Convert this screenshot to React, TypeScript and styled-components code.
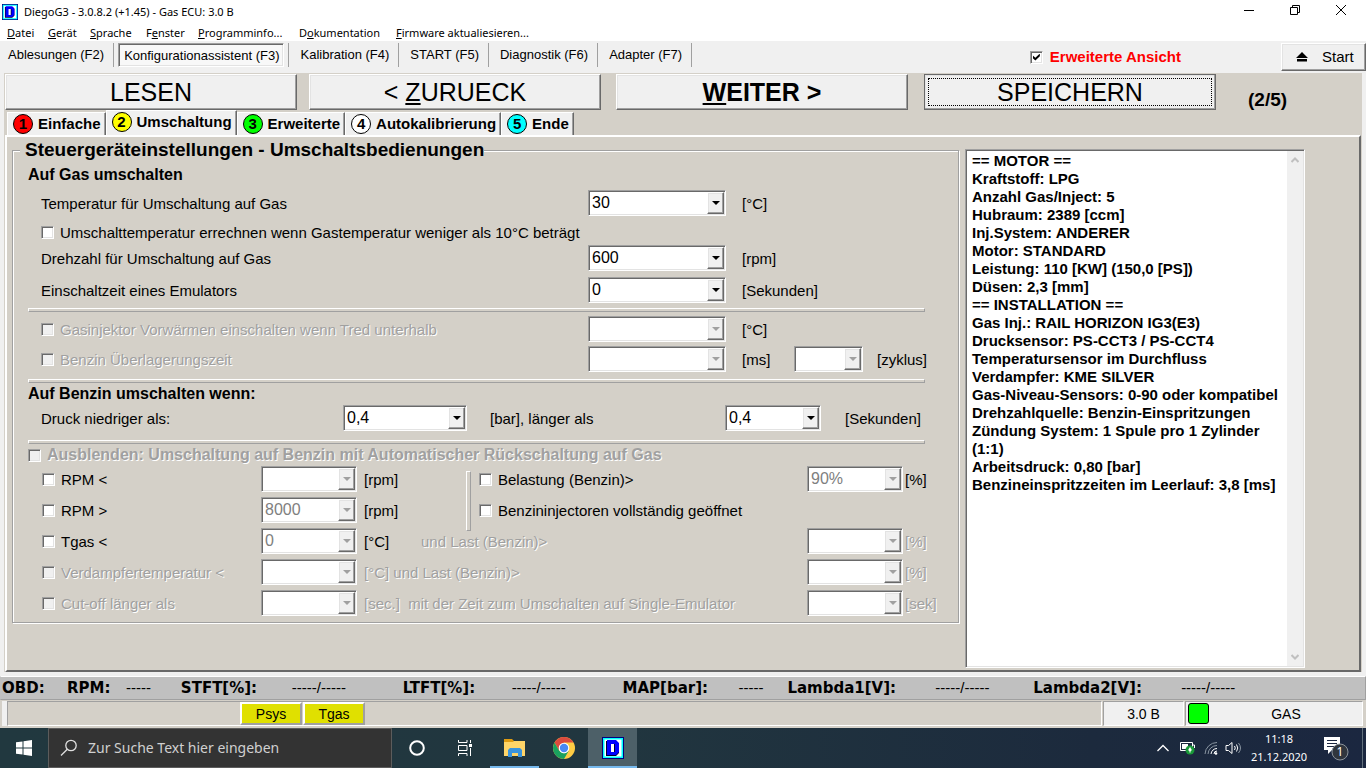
import React from "react";
import styled, { createGlobalStyle, css } from "styled-components";

const face = "#d4d0c8";
const light = "#f0f0f0";
const arial = '"Liberation Sans", Arial, sans-serif';
const segoe = '"Noto Sans", "Open Sans", sans-serif';

const GlobalStyle = createGlobalStyle`
  * { box-sizing: border-box; }
  body { margin: 0; background: ${light}; color: #000; font: 16px/20px ${arial}; }
  button, input, select, textarea { font: inherit; color: inherit; margin: 0; }
`;

const raised = css`
  border: 1px solid;
  border-color: #fff #696969 #696969 #fff;
  box-shadow: inset -1px -1px #a0a0a0, inset 1px 1px #e3e3e3;
`;
const sunken = css`
  border: 1px solid;
  border-color: #a0a0a0 #fff #fff #a0a0a0;
  box-shadow: inset 1px 1px #696969, inset -1px -1px #e3e3e3;
`;
const disabledText = css`
  color: #a0a0a0;
  text-shadow: 1px 1px 0 #fff;
`;

const Screen = styled.div`
  display: flex;
  flex-direction: column;
  min-height: 100vh;
`;

/* ---------- title and menu ---------- */
const TitleBar = styled.header`
  display: flex;
  align-items: center;
  height: 24px;
  padding: 0 2px;
  background: #fff;
  font: 11px/16px ${segoe};
`;
const Title = styled.h1`
  flex: 1;
  margin: 0;
  padding-left: 6px;
  font: inherit;
`;
const WindowButton = styled.button`
  display: flex;
  align-items: center;
  align-self: flex-start;
  justify-content: center;
  width: 46px;
  height: 20px;
  padding: 0;
  border: 0;
  background: none;
`;
const MenuBar = styled.nav`
  display: grid;
  grid-template-columns: 41px 42px 56px 52px 101px 97px auto;
  justify-content: start;
  height: 17px;
  padding-left: 7px;
  background: #fff;
`;
const MenuButton = styled.button`
  padding: 0;
  border: 0;
  background: none;
  font: 11px/17px ${segoe};
  text-align: left;
  white-space: nowrap;
`;

/* ---------- toolbar ---------- */
const ToolBar = styled.div`
  display: flex;
  align-items: flex-start;
  height: 32px;
  padding: 2px 0 0 1px;
`;
const ToolItem = styled.div`
  padding-right: 4px;
  margin-right: 4px;
  border-right: 1px solid #a0a0a0;
`;
const ToolButton = styled.button<{ $pressed?: boolean }>`
  display: block;
  height: 24px;
  padding: 0 4px 0 6px;
  border: 1px solid transparent;
  background: none;
  font-size: 13px;
  line-height: 22px;
  white-space: nowrap;
  ${(p) =>
    p.$pressed &&
    css`
      ${sunken}
      padding: 2px 4px 0 5px;
      line-height: 20px;
      background: #f8f8f8;
    `}
`;
const ExtendedView = styled.label`
  display: flex;
  align-items: center;
  gap: 7px;
  margin-left: auto;
  padding-top: 4px;
  color: #f00;
  font-size: 15px;
  font-weight: bold;
`;
const StartButton = styled.button`
  ${raised}
  display: flex;
  align-items: center;
  gap: 14px;
  width: 85px;
  height: 28px;
  margin-left: 100px;
  padding: 0 0 0 14px;
  background: ${light};
  font-size: 15px;
`;
const CheckInput = styled.input`
  ${sunken}
  appearance: none;
  flex: none;
  display: grid;
  place-items: center;
  width: 13px;
  height: 13px;
  background: #fff;
  &:disabled {
    background: ${light};
  }
  &:checked::after {
    content: "";
    width: 7px;
    height: 7px;
    background: #000;
    clip-path: polygon(0 28%, 36% 60%, 100% 0, 100% 40%, 36% 100%, 0 68%);
  }
`;

/* ---------- main area ---------- */
const Main = styled.main`
  display: flex;
  flex: 1;
  flex-direction: column;
  margin: 0 4px 4px;
  padding: 1px 0 0 1px;
  background: ${face};
`;
const StepBar = styled.div`
  display: grid;
  grid-template-columns: 292fr 12fr 292fr 15fr 292fr 16fr 292fr 32fr 114fr;
`;
const StepButton = styled.button<{ $column: number; $bold?: boolean; $focused?: boolean }>`
  ${raised}
  grid-row: 1;
  grid-column: ${(p) => p.$column};
  height: 36px;
  padding: 0;
  background: ${light};
  font-size: 25px;
  line-height: 32px;
  font-weight: ${(p) => (p.$bold ? "bold" : "normal")};
  ${(p) =>
    p.$focused &&
    css`
      border-color: #696969;
      outline: 1px dotted #000;
      outline-offset: -5px;
    `}
`;
const StepCount = styled.div`
  grid-row: 1;
  grid-column: 9;
  padding-top: 16px;
  font-size: 19px;
  font-weight: bold;
`;
const TabBar = styled.div`
  display: flex;
  align-items: flex-end;
  height: 25px;
  padding-left: 2px;
`;
const Tab = styled.button<{ $active?: boolean }>`
  display: flex;
  align-items: center;
  gap: 5px;
  height: ${(p) => (p.$active ? 25 : 23)}px;
  padding: ${(p) => (p.$active ? "0 4px 3px 5px" : "0 4px 0 5px")};
  border: 1px solid;
  border-color: #fff #696969 transparent #fff;
  border-bottom: 0;
  box-shadow: inset -1px 0 #a0a0a0;
  background: ${light};
  font-size: 15px;
  font-weight: bold;
  white-space: nowrap;
`;
const TabNumber = styled.span<{ $color: string }>`
  width: 20px;
  height: 20px;
  border: 1px solid #000;
  border-radius: 50%;
  background: ${(p) => p.$color};
  line-height: 18px;
  text-align: center;
`;
const Panel = styled.section`
  display: flex;
  flex: 1;
  align-items: flex-start;
  gap: 6px;
  margin-right: 1px;
  padding: 1px 54px 2px 5px;
  border: 2px solid;
  border-color: #fff #696969 #696969 #fff;
`;
const Group = styled.fieldset`
  flex: 1;
  min-width: 0;
  margin: 0;
  padding: 2px 0 6px;
  border: 1px solid #a0a0a0;
  box-shadow: 1px 1px #fff, inset 1px 1px #fff;
`;
const Legend = styled.legend`
  margin-left: 7px;
  padding: 0 0 0 5px;
  background: ${face};
  font-size: 19px;
  line-height: 24px;
  font-weight: bold;
`;
const Heading = styled.h2`
  margin: 0 0 0 15px;
  font-size: 16px;
  line-height: 22px;
`;
const Rule = styled.hr<{ $before: number; $after: number }>`
  height: 4px;
  margin: ${(p) => p.$before}px 33px ${(p) => p.$after}px 15px;
  border: 1px solid;
  border-color: #fff #a0a0a0 #a0a0a0 #fff;
`;
const Row = styled.div<{ $gap?: number }>`
  display: grid;
  grid-template-columns: minmax(0, 1fr) 154px 52px 83px 81px;
  align-items: center;
  height: 26px;
  margin-top: ${(p) => p.$gap ?? 0}px;
  padding-left: 28px;
  white-space: nowrap;
`;
const PressureRow = styled(Row)`
  grid-template-columns: minmax(0, 1fr) 147px 235px 120px 113px;
`;
const ReturnGrid = styled.div`
  display: grid;
  grid-template-columns: minmax(0, 1fr) 103px 57px 45px 13px 328px 98px 53px;
  grid-auto-rows: 26px;
  row-gap: 5px;
  align-items: center;
  padding-left: 29px;
  white-space: nowrap;
`;
const Cell = styled.div<{ $row: number; $from: number; $to?: number }>`
  display: flex;
  grid-row: ${(p) => p.$row};
  grid-column: ${(p) => p.$from} / ${(p) => p.$to ?? p.$from + 1};
`;
const Divider = styled.div`
  grid-row: 1 / 3;
  grid-column: 5;
  align-self: start;
  width: 5px;
  height: 60px;
  margin-top: 5px;
  border: 1px solid;
  border-color: #fff #a0a0a0 #a0a0a0 #fff;
`;
const Text = styled.label<{ $off?: boolean }>`
  padding-top: 2px;
  font-size: 15px;
  ${(p) => p.$off && disabledText}
`;
const CheckLabel = styled.label<{ $off?: boolean; $bold?: boolean }>`
  display: flex;
  align-items: center;
  gap: 6px;
  padding-top: ${(p) => (p.$bold ? 0 : 1)}px;
  font-size: ${(p) => (p.$bold ? 16 : 15)}px;
  font-weight: ${(p) => (p.$bold ? "bold" : "normal")};
  ${(p) => p.$off && disabledText}
`;
const Combo = styled.span<{ $width: number }>`
  ${sunken}
  display: grid;
  grid-template-columns: 1fr 17px;
  width: ${(p) => p.$width}px;
  height: 26px;
  padding: 1px;
  background: #fff;
`;
const ComboSelect = styled.select`
  appearance: none;
  grid-area: 1 / 1 / 2 / 3;
  min-width: 0;
  padding: 0 0 0 2px;
  border: 0;
  background: #fff;
  outline: 0;
  &:disabled {
    color: #808080;
    opacity: 1;
  }
`;
const ComboArrow = styled.span<{ $off?: boolean }>`
  ${raised}
  grid-area: 1 / 2;
  display: grid;
  place-items: center;
  background: ${light};
  pointer-events: none;
  &::after {
    content: "";
    border: 4px solid transparent;
    border-top-color: ${(p) => (p.$off ? "#a0a0a0" : "#000")};
    border-bottom: 0;
  }
`;
const Info = styled.div`
  ${sunken}
  display: flex;
  align-self: stretch;
  width: 340px;
  margin-top: 11px;
  padding: 1px;
  background: #fff;
`;
const InfoText = styled.textarea`
  flex: 1;
  min-width: 0;
  padding: 1px 4px 0 5px;
  border: 0;
  outline: 0;
  resize: none;
  overflow: hidden;
  background: #fff;
  font-size: 15px;
  line-height: 18px;
  font-weight: bold;
`;
const ScrollTrack = styled.div`
  display: flex;
  flex-direction: column;
  justify-content: space-between;
  align-items: center;
  width: 16px;
  padding: 6px 0;
  background: ${light};
`;

/* ---------- readouts and status ---------- */
const Readouts = styled.div`
  display: grid;
  grid-template-columns: 65fr 59fr 55fr 111fr 111fr 109fr 111fr 116fr 49fr 148fr 98fr 148fr 184fr;
  align-items: center;
  height: 24px;
  padding-left: 1px;
  border: 1px solid;
  border-color: #fff #a0a0a0 #a0a0a0 #c0c0c0;
  background: #c0c0c0;
  white-space: nowrap;
`;
const ReadoutName = styled.span`
  font: bold 15px/20px "DejaVu Sans", Verdana, sans-serif;
`;
const ReadoutValue = styled.span`
  font-size: 15px;
`;
const StatusBar = styled.footer`
  display: flex;
  gap: 1px;
  height: 28px;
  padding: 1px 3px 2px 2px;
  background: ${face};
  font-size: 14px;
`;
const StatusCell = styled.div<{ $width?: number; $plain?: boolean }>`
  display: flex;
  align-items: center;
  justify-content: center;
  gap: 1px;
  flex: ${(p) => (p.$width ? `0 0 ${p.$width}px` : "1")};
  border: 1px solid;
  border-color: #a0a0a0 #fff #fff #a0a0a0;
  background: ${(p) => (p.$plain ? face : light)};
`;
const SensorCell = styled(StatusCell)`
  justify-content: flex-start;
  margin-left: 5px;
  padding-left: 232px;
  box-shadow: -5px 0 ${light};
`;
const SensorButton = styled.button`
  width: 62px;
  height: 23px;
  padding: 0;
  border: 2px solid;
  border-color: #fff #a0a0a0 #a0a0a0 #fff;
  background: #e0e000;
  line-height: 18px;
`;
const Lamp = styled.span`
  width: 21px;
  height: 21px;
  margin-left: 2px;
  border: 1px solid #000;
  border-radius: 3px;
  background: #0f0;
`;
const Fuel = styled.span`
  flex: 1;
  text-align: center;
`;

/* ---------- taskbar ---------- */
const TaskBar = styled.nav`
  display: flex;
  height: 40px;
  background: linear-gradient(90deg, #21383f 0%, #21363f 45%, #1c2a3d 80%, #1b2740 100%);
  color: #fff;
  font: 11px/18px ${segoe};
`;
const TaskButton = styled.button<{ $active?: boolean; $open?: boolean }>`
  display: flex;
  align-items: center;
  justify-content: center;
  width: 49px;
  padding: 0;
  border: 0;
  background: ${(p) => (p.$active ? "#4d6068" : "none")};
  ${(p) => p.$open && "box-shadow: inset 0 -2px #76b9ed;"}
`;
const StartMenuButton = styled(TaskButton)`
  width: 48px;
`;
const SearchBox = styled.label`
  display: flex;
  align-items: center;
  gap: 10px;
  width: 344px;
  padding-left: 11px;
  border: 1px solid #5c5c5c;
  background: #333;
`;
const SearchInput = styled.input`
  flex: 1;
  min-width: 0;
  padding: 0;
  border: 0;
  outline: 0;
  background: none;
  font-size: 14px;
  &::placeholder {
    color: #d0d0d0;
    opacity: 1;
  }
`;
const Tray = styled.div`
  display: flex;
  align-items: center;
  margin-left: auto;
  padding-right: 3px;
`;
const TrayButton = styled.button<{ $width: number }>`
  display: flex;
  align-items: center;
  justify-content: center;
  width: ${(p) => p.$width}px;
  height: 40px;
  padding: 0;
  border: 0;
  background: none;
`;
const Clock = styled.time`
  width: 60px;
  margin: 0 4px;
  text-align: center;
`;
const ShowDesktop = styled.div`
  width: 4px;
  border-left: 1px solid #62707c;
`;

const AppLogo = ({ size }: { size: number }) => (
  <svg width={size} height={size} viewBox="0 0 22 22" aria-hidden="true">
    <rect width="22" height="22" fill="#000080" />
    <rect x="1" y="1" width="20" height="20" fill="#0ff" />
    <rect x="2.500" y="2.500" width="17" height="17" fill="#fff" />
    <path fillRule="evenodd" d="M4 4h10l3 3v9l-3 3H4zM8 7v9h4V7z" fill="#000030" />
    <path fillRule="evenodd" d="M5 3h9l3 3v9l-3 3H5zM9 7v8h4V7z" fill="#00f" />
  </svg>
);

type ComboProps = { id: string; width: number; value?: string; off?: boolean; label: string };
const ComboBox = ({ id, width, value = "", off, label }: ComboProps) => (
  <Combo $width={width}>
    <ComboSelect id={id} defaultValue={value} disabled={off} aria-label={label}>
      <option value={value}>{value}</option>
    </ComboSelect>
    <ComboArrow $off={off} />
  </Combo>
);

const Check = ({ text, off, bold }: { text: string; off?: boolean; bold?: boolean }) => (
  <CheckLabel $off={off} $bold={bold}>
    <CheckInput type="checkbox" disabled={off} />
    {text}
  </CheckLabel>
);

const menus: [string, string, string][] = [
  ["", "D", "atei"],
  ["", "G", "erät"],
  ["", "S", "prache"],
  ["F", "e", "nster"],
  ["", "P", "rogramminfo..."],
  ["D", "o", "kumentation"],
  ["", "F", "irmware aktualiesieren..."],
];
const tools = [
  "Ablesungen (F2)",
  "Konfigurationassistent (F3)",
  "Kalibration (F4)",
  "START (F5)",
  "Diagnostik (F6)",
  "Adapter (F7)",
];
const tabs: [string, string][] = [
  ["Einfache", "#f00"],
  ["Umschaltung", "#ff0"],
  ["Erweiterte", "#0f0"],
  ["Autokalibrierung", "#fff"],
  ["Ende", "#0ff"],
];
const info = [
  "== MOTOR ==",
  "Kraftstoff: LPG",
  "Anzahl Gas/Inject: 5",
  "Hubraum: 2389 [ccm]",
  "Inj.System: ANDERER",
  "Motor: STANDARD",
  "Leistung: 110 [KW] (150,0 [PS])",
  "Düsen: 2,3 [mm]",
  "== INSTALLATION ==",
  "Gas Inj.: RAIL HORIZON IG3(E3)",
  "Drucksensor: PS-CCT3 / PS-CCT4",
  "Temperatursensor im Durchfluss",
  "Verdampfer: KME SILVER",
  "Gas-Niveau-Sensors: 0-90 oder kompatibel",
  "Drehzahlquelle: Benzin-Einspritzungen",
  "Zündung System: 1 Spule pro 1 Zylinder (1:1)",
  "Arbeitsdruck: 0,80 [bar]",
  "Benzineinspritzzeiten im Leerlauf: 3,8 [ms]",
].join("\n");

export default function App() {
  return (
    <Screen>
      <GlobalStyle />
      <TitleBar>
        <AppLogo size={16} />
        <Title>DiegoG3 - 3.0.8.2 (+1.45) - Gas ECU: 3.0 B</Title>
        <WindowButton aria-label="Minimieren">
          <svg width="10" height="10"><path d="M0 5.500h10" stroke="#000" /></svg>
        </WindowButton>
        <WindowButton aria-label="Verkleinern">
          <svg width="10" height="10" fill="none" stroke="#000"><path d="M0.500 2.500h7v7h-7zM2.500 2.500v-2h7v7h-2" /></svg>
        </WindowButton>
        <WindowButton aria-label="Schließen">
          <svg width="10" height="10"><path d="M0 0l10 10M10 0L0 10" stroke="#000" /></svg>
        </WindowButton>
      </TitleBar>
      <MenuBar>
        {menus.map(([a, key, b]) => (
          <MenuButton key={b}>{a}<u>{key}</u>{b}</MenuButton>
        ))}
      </MenuBar>

      <ToolBar>
        {tools.map((name, i) => (
          <ToolItem key={name}><ToolButton $pressed={i === 1}>{name}</ToolButton></ToolItem>
        ))}
        <ExtendedView>
          <CheckInput type="checkbox" defaultChecked />
          Erweiterte Ansicht
        </ExtendedView>
        <StartButton>
          <svg width="12" height="10" aria-hidden="true"><path d="M6 0l6 6H0zM1 7h10v2.500H1z" /></svg>
          Start
        </StartButton>
      </ToolBar>

      <Main>
        <StepBar>
          <StepButton $column={1}>LESEN</StepButton>
          <StepButton $column={3}>&lt; <u>Z</u>URUECK</StepButton>
          <StepButton $column={5} $bold><u>W</u>EITER &gt;</StepButton>
          <StepButton $column={7} $focused>SPEICHERN</StepButton>
          <StepCount>(2/5)</StepCount>
        </StepBar>
        <TabBar role="tablist">
          {tabs.map(([name, color], i) => (
            <Tab key={name} role="tab" aria-selected={i === 1} $active={i === 1}>
              <TabNumber $color={color}>{i + 1}</TabNumber>
              {name}
            </Tab>
          ))}
        </TabBar>
        <Panel>
          <Group>
            <Legend>Steuergeräteinstellungen - Umschaltsbedienungen</Legend>
            <Heading>Auf Gas umschalten</Heading>
            <Row $gap={4}>
              <Text htmlFor="temp">Temperatur für Umschaltung auf Gas</Text>
              <ComboBox id="temp" label="Temperatur" width={138} value="30" />
              <Text as="span">[°C]</Text>
            </Row>
            <Row $gap={3}>
              <Check text="Umschalttemperatur errechnen wenn Gastemperatur weniger als 10°C beträgt" />
            </Row>
            <Row>
              <Text htmlFor="speed">Drehzahl für Umschaltung auf Gas</Text>
              <ComboBox id="speed" label="Drehzahl" width={138} value="600" />
              <Text as="span">[rpm]</Text>
            </Row>
            <Row $gap={6}>
              <Text htmlFor="emu">Einschaltzeit eines Emulators</Text>
              <ComboBox id="emu" label="Einschaltzeit" width={138} value="0" />
              <Text as="span">[Sekunden]</Text>
            </Row>
            <Rule $before={5} $after={4} />
            <Row>
              <Check off text="Gasinjektor Vorwärmen einschalten wenn Tred unterhalb" />
              <ComboBox id="preheat" label="Tred" width={138} off />
              <Text as="span">[°C]</Text>
            </Row>
            <Row $gap={4}>
              <Check off text="Benzin Überlagerungszeit" />
              <ComboBox id="overlap" label="Überlagerungszeit" width={138} off />
              <Text as="span">[ms]</Text>
              <ComboBox id="cycle" label="Zyklus" width={69} off />
              <Text as="span">[zyklus]</Text>
            </Row>
            <Rule $before={7} $after={0} />
            <Heading>Auf Benzin umschalten wenn:</Heading>
            <PressureRow>
              <Text htmlFor="press">Druck niedriger als:</Text>
              <ComboBox id="press" label="Druck" width={124} value="0,4" />
              <Text htmlFor="pressTime">[bar], länger als</Text>
              <ComboBox id="pressTime" label="Dauer" width={96} value="0,4" />
              <Text as="span">[Sekunden]</Text>
            </PressureRow>
            <Rule $before={9} $after={0} />
            <Heading>
              <Check off bold text="Ausblenden: Umschaltung auf Benzin mit Automatischer Rückschaltung auf Gas" />
            </Heading>
            <ReturnGrid>
              <Cell $row={1} $from={1}><Check text="RPM <" /></Cell>
              <Cell $row={1} $from={2}><ComboBox id="rpmLow" label="RPM kleiner" width={96} off /></Cell>
              <Cell $row={1} $from={3}><Text as="span">[rpm]</Text></Cell>
              <Cell $row={1} $from={6}><Check text="Belastung (Benzin)>" /></Cell>
              <Cell $row={1} $from={7}><ComboBox id="load" label="Belastung" width={96} value="90%" off /></Cell>
              <Cell $row={1} $from={8}><Text as="span">[%]</Text></Cell>
              <Divider />
              <Cell $row={2} $from={1}><Check text="RPM >" /></Cell>
              <Cell $row={2} $from={2}><ComboBox id="rpmHigh" label="RPM größer" width={96} value="8000" off /></Cell>
              <Cell $row={2} $from={3}><Text as="span">[rpm]</Text></Cell>
              <Cell $row={2} $from={6}><Check text="Benzininjectoren vollständig geöffnet" /></Cell>
              <Cell $row={3} $from={1}><Check text="Tgas <" /></Cell>
              <Cell $row={3} $from={2}><ComboBox id="tgas" label="Tgas" width={96} value="0" off /></Cell>
              <Cell $row={3} $from={3}><Text as="span">[°C]</Text></Cell>
              <Cell $row={3} $from={4} $to={7}><Text htmlFor="tgasLoad" $off>und Last (Benzin)&gt;</Text></Cell>
              <Cell $row={3} $from={7}><ComboBox id="tgasLoad" label="Last" width={96} off /></Cell>
              <Cell $row={3} $from={8}><Text as="span" $off>[%]</Text></Cell>
              <Cell $row={4} $from={1}><Check off text="Verdampfertemperatur <" /></Cell>
              <Cell $row={4} $from={2}><ComboBox id="evap" label="Verdampfertemperatur" width={96} off /></Cell>
              <Cell $row={4} $from={3} $to={7}><Text htmlFor="evapLoad" $off>[°C] und Last (Benzin)&gt;</Text></Cell>
              <Cell $row={4} $from={7}><ComboBox id="evapLoad" label="Last" width={96} off /></Cell>
              <Cell $row={4} $from={8}><Text as="span" $off>[%]</Text></Cell>
              <Cell $row={5} $from={1}><Check off text="Cut-off länger als" /></Cell>
              <Cell $row={5} $from={2}><ComboBox id="cutoff" label="Cut-off" width={96} off /></Cell>
              <Cell $row={5} $from={3} $to={7}>
                <Text htmlFor="single" $off>[sec.]&nbsp; mit der Zeit zum Umschalten auf Single-Emulator</Text>
              </Cell>
              <Cell $row={5} $from={7}><ComboBox id="single" label="Single-Emulator" width={96} off /></Cell>
              <Cell $row={5} $from={8}><Text as="span" $off>[sek]</Text></Cell>
            </ReturnGrid>
          </Group>
          <Info>
            <InfoText readOnly aria-label="Zusammenfassung" value={info} />
            <ScrollTrack>
              <svg width="8" height="6" fill="none" stroke="#c0c0c0" strokeWidth="2"><path d="M0.500 5L4 1.500 7.500 5" /></svg>
              <svg width="8" height="6" fill="none" stroke="#c0c0c0" strokeWidth="2"><path d="M0.500 1L4 4.500 7.500 1" /></svg>
            </ScrollTrack>
          </Info>
        </Panel>
      </Main>

      <Readouts>
        <ReadoutName>OBD:</ReadoutName>
        <ReadoutName>RPM:</ReadoutName>
        <ReadoutValue>-----</ReadoutValue>
        <ReadoutName>STFT[%]:</ReadoutName>
        <ReadoutValue>-----/-----</ReadoutValue>
        <ReadoutName>LTFT[%]:</ReadoutName>
        <ReadoutValue>-----/-----</ReadoutValue>
        <ReadoutName>MAP[bar]:</ReadoutName>
        <ReadoutValue>-----</ReadoutValue>
        <ReadoutName>Lambda1[V]:</ReadoutName>
        <ReadoutValue>-----/-----</ReadoutValue>
        <ReadoutName>Lambda2[V]:</ReadoutName>
        <ReadoutValue>-----/-----</ReadoutValue>
      </Readouts>
      <StatusBar>
        <SensorCell $plain>
          <SensorButton>Psys</SensorButton>
          <SensorButton>Tgas</SensorButton>
        </SensorCell>
        <StatusCell $width={81}>3.0 B</StatusCell>
        <StatusCell $width={178}>
          <Lamp />
          <Fuel>GAS</Fuel>
        </StatusCell>
      </StatusBar>

      <TaskBar>
        <StartMenuButton aria-label="Startmenü">
          <svg width="16" height="16" fill="#fff"><path d="M0 2.300L6.500 1.400V7.500H0zM7.500 1.200L16 0V7.500H7.500zM0 8.500H6.500V14.600L0 13.700zM7.500 8.500H16V16L7.500 14.800z" /></svg>
        </StartMenuButton>
        <SearchBox>
          <svg width="18" height="18" viewBox="0 0 18 18" fill="none" stroke="#e0e0e0" strokeWidth="1.300">
            <circle cx="11" cy="6.500" r="5.200" /><path d="M7.300 10.200L1 16.500" />
          </svg>
          <SearchInput type="text" placeholder="Zur Suche Text hier eingeben" aria-label="Suche" />
        </SearchBox>
        <TaskButton aria-label="Cortana">
          <svg width="18" height="18" fill="none" stroke="#fff" strokeWidth="2"><circle cx="9" cy="9" r="6.800" /></svg>
        </TaskButton>
        <TaskButton aria-label="Aktive Anwendungen">
          <svg width="17" height="16" fill="none" stroke="#fff">
            <path d="M1.500 0v2.500h8.500V0M1.500 16v-2.500h8.500V16M1.500 5.500h8.500v5h-8.500zM13.500 0v3M13.500 8v8" />
            <rect x="12.500" y="4.500" width="2" height="2" fill="#fff" />
          </svg>
        </TaskButton>
        <TaskButton $open aria-label="Explorer">
          <svg width="22" height="20" viewBox="0 0 22 20">
            <path d="M0 1h8l2 2h11v5H0z" fill="#e09c12" />
            <path d="M0 4h9l1-1h11v15H0z" fill="#ffd568" />
            <path d="M4 19v-7l2-2h10l2 2v7h-4v-4H8v4z" fill="#3a94dc" />
          </svg>
        </TaskButton>
        <TaskButton aria-label="Chrome">
          <svg width="22" height="22" viewBox="0 0 22 22">
            <circle cx="11" cy="11" r="11" fill="#fc4" />
            <path d="M1.500 5.500A11 11 0 0 1 20.500 5.500H11L6.200 13.800z" fill="#dc4b3e" />
            <path d="M1.500 5.500A11 11 0 0 0 11 22l4.800-8.200L11 16.500 6.200 13.800z" fill="#1aa15f" />
            <circle cx="11" cy="11" r="5.300" fill="#fff" />
            <circle cx="11" cy="11" r="4.200" fill="#4a89f4" />
          </svg>
        </TaskButton>
        <TaskButton $active $open aria-label="DiegoG3">
          <AppLogo size={22} />
        </TaskButton>
        <Tray>
          <TrayButton $width={24} aria-label="Weitere Symbole">
            <svg width="12" height="8" fill="none" stroke="#fff" strokeWidth="1.300"><path d="M0.500 7L6 1.500 11.500 7" /></svg>
          </TrayButton>
          <TrayButton $width={24} aria-label="Akku">
            <svg width="16" height="14" viewBox="0 0 16 14">
              <path d="M1.500 1.500h12v8h-12zM14 4h1.500v3" fill="none" stroke="#fff" />
              <rect x="3" y="3" width="6" height="5" fill="#fff" />
              <circle cx="11" cy="9" r="4.500" fill="#1a9a38" />
              <path d="M11 12V7M9.500 9L11 6.500 12.500 9 11 10.500z" fill="#fff" stroke="#fff" strokeWidth="0.600" />
            </svg>
          </TrayButton>
          <TrayButton $width={24} aria-label="WLAN">
            <svg width="14" height="14" viewBox="0 0 14 14" fill="none">
              <path d="M1 13A12 12 0 0 1 13 1.500M4 13A9 9 0 0 1 13 4.500" stroke="#8a96a2" />
              <path d="M7 13A6 6 0 0 1 13 7.500M10 13a3 3 0 0 1 3-3" stroke="#fff" />
              <circle cx="12" cy="12.500" r="1.300" fill="#fff" />
            </svg>
          </TrayButton>
          <TrayButton $width={22} aria-label="Lautstärke">
            <svg width="18" height="14" viewBox="0 0 18 14" fill="none" stroke="#fff">
              <path d="M1 4.500h2.500L7 1.500v11L3.500 9.500H1zM9.500 5q1.500 2 0 4M11.500 3.500q2.500 3.500 0 7" />
              <path d="M13.500 2q4 5 0 10" stroke="#8a96a2" />
            </svg>
          </TrayButton>
          <Clock>11:18<br />21.12.2020</Clock>
          <TrayButton $width={46} aria-label="Benachrichtigungen">
            <svg width="26" height="26" viewBox="0 0 26 26">
              <path d="M1 2h16v13H9l-4 4v-4H1z" fill="#fff" />
              <path d="M4 5.500h10M4 8.500h10M4 11.500h7" stroke="#1b2740" />
              <circle cx="17" cy="17" r="8" fill="#30363e" stroke="#8c949c" />
              <text x="17" y="21" fill="#fff" fontSize="12" textAnchor="middle">1</text>
            </svg>
          </TrayButton>
        </Tray>
        <ShowDesktop />
      </TaskBar>
    </Screen>
  );
}
